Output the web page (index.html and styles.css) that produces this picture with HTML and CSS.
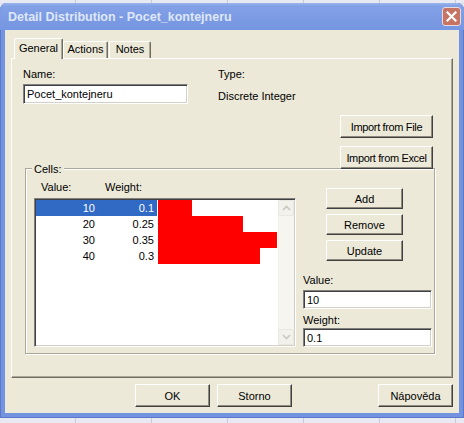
FILE: index.html
```html
<!DOCTYPE html>
<html>
<head>
<meta charset="utf-8">
<title>Detail Distribution</title>
<link rel="stylesheet" href="styles.css">
</head>
<body>
<div class="window">
  <div class="titlebar">
    <span class="title">Detail Distribution - Pocet_kontejneru</span>
    <span class="close"><svg width="11" height="11" viewBox="0 0 11 11"><path d="M1.5 1.5 L9.5 9.5 M9.5 1.5 L1.5 9.5" stroke="#fff" stroke-width="2.2" stroke-linecap="square"/></svg></span>
  </div>
  <div class="client">
    <div class="tabs">
      <div class="tab tab-general active">General</div>
      <div class="tab tab-actions">Actions</div>
      <div class="tab tab-notes">Notes</div>
    </div>
    <div class="panel">
      <div class="top-row">
        <div class="name-col">
          <div class="label">Name:</div>
          <div class="input name-input">Pocet_kontejneru</div>
        </div>
        <div class="type-col">
          <div class="label">Type:</div>
          <div class="type-value">Discrete Integer</div>
        </div>
      </div>
      <div class="import">
        <div class="btn import-btn">Import from File</div>
        <div class="btn import-btn">Import from Excel</div>
      </div>
      <div class="group">
        <div class="legend">Cells:</div>
        <div class="group-body">
          <div class="list-col">
            <div class="headers">
              <span class="h-value">Value:</span>
              <span class="h-weight">Weight:</span>
            </div>
            <div class="list">
              <div class="rows">
                <div class="row selected"><span class="cv">10</span><span class="cw">0.1</span><span class="bar" style="width:34px"></span></div>
                <div class="row"><span class="cv">20</span><span class="cw">0.25</span><span class="bar" style="width:85px"></span></div>
                <div class="row"><span class="cv">30</span><span class="cw">0.35</span><span class="bar" style="width:119px"></span></div>
                <div class="row"><span class="cv">40</span><span class="cw">0.3</span><span class="bar" style="width:102px"></span></div>
              </div>
              <div class="scrollbar">
                <div class="sb-btn"><svg width="9" height="6" viewBox="0 0 9 6"><path d="M1 5 L4.5 1.5 L8 5" fill="none" stroke="#c9c8c0" stroke-width="1.6"/></svg></div>
                <div class="sb-track"></div>
                <div class="sb-btn"><svg width="9" height="6" viewBox="0 0 9 6"><path d="M1 1 L4.5 4.5 L8 1" fill="none" stroke="#c9c8c0" stroke-width="1.6"/></svg></div>
              </div>
            </div>
          </div>
          <div class="edit-col">
            <div class="btn side-btn first">Add</div>
            <div class="btn side-btn">Remove</div>
            <div class="btn side-btn">Update</div>
            <div class="label value-label">Value:</div>
            <div class="input small-input">10</div>
            <div class="label weight-label">Weight:</div>
            <div class="input small-input weight-input">0.1</div>
          </div>
        </div>
      </div>
    </div>
    <div class="footer">
      <div class="btn foot-btn ok">OK</div>
      <div class="btn foot-btn storno">Storno</div>
      <div class="btn foot-btn help">Nápověda</div>
    </div>
  </div>
</div>
</body>
</html>
```

FILE: styles.css
```css
html, body {
  margin: 0;
  padding: 0;
}
body {
  width: 464px;
  height: 423px;
  overflow: hidden;
  background-color: #e9e9f4;
  background-image:
    repeating-linear-gradient(90deg, transparent 0, transparent 75px, #c9c9dc 75px, #c9c9dc 76px),
    repeating-linear-gradient(0deg, transparent 0, transparent 9px, #dcdcea 9px, #dcdcea 10px);
  font-family: "Liberation Sans", Arial, sans-serif;
  font-size: 11px;
  color: #000;
}
.window {
  margin-top: 3px;
  width: 464px;
  height: 415px;
  box-sizing: border-box;
  padding: 0 5px 5px;
  background: #7393e0;
  border-radius: 7px 7px 0 0;
  display: flex;
  flex-direction: column;
  box-shadow: inset 1px 0 0 #5a78c8, inset -1px 0 0 #5a78c8, inset 0 -1px 0 #5a78c8;
}
.titlebar {
  height: 27px;
  display: flex;
  align-items: center;
  background: linear-gradient(#9ab6ee 0, #82a1e6 3px, #7b9ae3 60%, #7596e2 100%);
  margin: 0 -5px;
  padding: 0 8px 0 8px;
  border-radius: 7px 7px 0 0;
}
.title {
  color: #dfe7f8;
  font-weight: bold;
  font-size: 12.5px;
  padding-top: 1px;
}
.close {
  margin-left: auto;
  margin-right: -5px;
  width: 19px;
  height: 19px;
  box-sizing: border-box;
  border: 1px solid #e6dce0;
  border-radius: 3px;
  background: #c77464;
  display: flex;
  align-items: center;
  justify-content: center;
}
.close svg {
  display: block;
}
.client {
  flex: 1;
  background: #ece9d8;
  padding: 8px 6px 6px;
  display: flex;
  flex-direction: column;
}
.tabs {
  display: flex;
  align-items: flex-end;
  height: 20px;
  padding-left: 3px;
}
.tab {
  box-sizing: border-box;
  height: 17px;
  border-top: 1px solid #fff;
  border-left: 1px solid #fff;
  border-right: 1px solid #716f64;
  box-shadow: inset -1px 0 0 #aca899;
  border-radius: 2px 2px 0 0;
  text-align: center;
  line-height: 15px;
}
.tab-general {
  width: 49px;
}
.tab-actions {
  width: 45px;
}
.tab-notes {
  width: 42px;
  margin-left: 1px;
}
.tab.active {
  height: 21px;
  margin-bottom: -1px;
  background: #ece9d8;
  position: relative;
  z-index: 1;
  line-height: 18px;
}
.panel {
  box-sizing: border-box;
  height: 320px;
  border: 1px solid;
  border-color: #fff #716f64 #716f64 #fff;
  box-shadow: inset -1px -1px 0 #aca899;
  padding: 9px 17px 0 11px;
}
.label {
  line-height: 13px;
  height: 13px;
}
.top-row {
  display: flex;
}
.name-col {
  width: 195px;
}
.input {
  box-sizing: border-box;
  background: #fff;
  border: 1px solid;
  border-color: #808080 #fff #fff #808080;
  box-shadow: inset 1px 1px 0 #404040, inset -1px -1px 0 #d4d0c8;
  padding-left: 3px;
  display: flex;
  align-items: center;
}
.name-input {
  margin-top: 3px;
  width: 165px;
  height: 20px;
}
.type-value {
  margin-top: 9px;
  line-height: 13px;
}
.btn {
  box-sizing: border-box;
  background: #ece9d8;
  border: 1px solid;
  border-color: #fff #404040 #404040 #fff;
  box-shadow: inset -1px -1px 0 #8e8b7e;
  display: flex;
  align-items: center;
  justify-content: center;
}
.import {
  display: flex;
  flex-direction: column;
  align-items: flex-end;
  gap: 8px;
  margin-top: 11px;
  padding-right: 2px;
}
.import-btn {
  width: 93px;
  height: 23px;
  letter-spacing: -0.35px;
}
.group {
  margin: -1px 0 0 2px;
  border: 1px solid #aca899;
  box-shadow: inset 1px 1px 0 #fff, 1px 1px 0 #fff;
  padding-bottom: 6px;
}
.legend {
  margin: -6px 0 0 6px;
  padding: 0 2px;
  width: max-content;
  background: #ece9d8;
  line-height: 13px;
}
.group-body {
  display: flex;
  padding: 0 1px 0 8px;
}
.headers {
  margin-top: 5px;
  height: 13px;
  line-height: 13px;
  display: flex;
  padding-left: 7px;
}
.h-value {
  width: 64px;
}
.list {
  margin-top: 4px;
  width: 262px;
  height: 149px;
  box-sizing: border-box;
  background: #fff;
  border: 1px solid;
  border-color: #808080 #fff #fff #808080;
  box-shadow: inset 1px 1px 0 #404040, inset -1px -1px 0 #d4d0c8;
  padding: 1px;
  display: flex;
}
.rows {
  flex: 1;
}
.row {
  display: flex;
  height: 16px;
  line-height: 16px;
}
.cv {
  width: 61px;
  box-sizing: border-box;
  text-align: right;
  padding-right: 2px;
}
.cw {
  width: 60px;
  box-sizing: border-box;
  text-align: right;
  padding-right: 3px;
}
.row.selected .cv,
.row.selected .cw {
  background: #316ac5;
  color: #fff;
}
.bar {
  margin-left: 1px;
  height: 16px;
  background: #ff0000;
}
.scrollbar {
  width: 16px;
  display: flex;
  flex-direction: column;
  background: #f6f5f0;
  box-shadow: inset 1px 0 0 #f0efe8;
}
.sb-btn {
  height: 16px;
  box-sizing: border-box;
  border: 1px solid #e8e7e0;
  border-radius: 2px;
  background: #f2f1eb;
  display: flex;
  align-items: center;
  justify-content: center;
}
.sb-track {
  flex: 1;
}
.edit-col {
  margin-left: 7px;
  width: 129px;
  display: flex;
  flex-direction: column;
}
.side-btn {
  width: 77px;
  height: 21px;
  margin-left: 23px;
  margin-top: 5px;
}
.side-btn.first {
  margin-top: 12px;
}
.value-label {
  margin-top: 13px;
}
.small-input {
  margin-top: 3px;
  height: 19px;
  width: 129px;
}
.weight-label {
  margin-top: 5px;
}
.weight-input {
  margin-top: 1px;
}
.footer {
  display: flex;
  margin-top: 6px;
}
.foot-btn {
  width: 75px;
  height: 23px;
}
.ok {
  margin-left: 124px;
}
.storno {
  margin-left: 7px;
}
.help {
  margin-left: auto;
}
```
